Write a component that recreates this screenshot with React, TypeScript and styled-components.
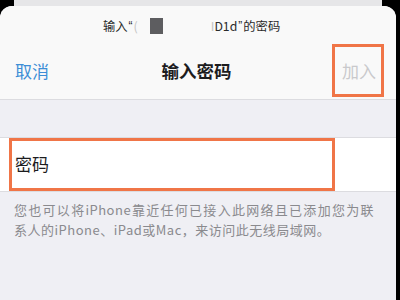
import React from 'react';
import styled, { createGlobalStyle } from 'styled-components';

const GlobalStyle = createGlobalStyle`
    html, body {
        margin: 0;
        padding: 0;
        background: #000;
    }
    body {
        font-family: "Noto Sans CJK SC", "Noto Sans", sans-serif;
        -webkit-font-smoothing: antialiased;
    }
`;

const App: React.FC = () => {
    return (
        <Screen>
            <GlobalStyle />
            <BackSheet />
            <Sheet>
                <Header>
                    <Subtitle>
                        输入<Quote>“</Quote><Faint>(</Faint>
                        <Masked />
                        <Hidden />
                        <Faint>I</Faint>D1d<Quote>”</Quote>的密码
                    </Subtitle>
                    <NavBar>
                        <NavButton>取消</NavButton>
                        <NavTitle>输入密码</NavTitle>
                        <Highlight>
                            <NavButton disabled>加入</NavButton>
                        </Highlight>
                    </NavBar>
                </Header>
                <Spacer />
                <FieldRow>
                    <FieldBox>
                        <FieldLabel>密码</FieldLabel>
                    </FieldBox>
                </FieldRow>
                <Footnote>
                    <FootLine full>您也可以将iPhone靠近任何已接入此网络且已添加您为联</FootLine>
                    <FootLine>系人的iPhone、iPad或Mac，来访问此无线局域网。</FootLine>
                </Footnote>
            </Sheet>
        </Screen>
    );
}

const Screen = styled.div`
    width: 400px;
    height: 300px;
    overflow: hidden;
    background: #000;
    display: flex;
    flex-direction: column;
`;

const BackSheet = styled.div`
    height: 6px;
    margin: 0 18px 0 14px;
    background: #e6e6e8;
    flex-shrink: 0;
`;

const Sheet = styled.div`
    flex: 1;
    margin-right: 4px;
    background: #efeff4;
    border-radius: 12px 12px 0 0;
    overflow: hidden;
`;

const Header = styled.div`
    background: #f9f9f9;
    border-bottom: 1px solid #dcdce0;
    height: 94px;
    box-sizing: border-box;
    display: flex;
    flex-direction: column;
`;

const Subtitle = styled.div`
    height: 36px;
    padding-top: 4px;
    box-sizing: border-box;
    display: flex;
    align-items: center;
    padding-left: 103px;
    font-size: 12.3px;
    color: #2a2a2a;
`;

const Quote = styled.span`
    font-family: "Liberation Sans", sans-serif;
    font-size: 12px;
    margin: 0 1px;
`;

const Faint = styled.span`
    color: #c4c4c4;
`;

const Masked = styled.span`
    display: inline-block;
    width: 13px;
    height: 16px;
    margin-left: 12px;
    background: #5d5d60;
`;

const Hidden = styled.span`
    display: inline-block;
    width: 48px;
`;

const NavBar = styled.div`
    flex: 1;
    display: flex;
    align-items: center;
    justify-content: space-between;
    padding: 0 12px 0 15px;
`;

const NavButton = styled.span<{ disabled?: boolean }>`
    font-size: 17px;
    color: ${({ disabled }) => (disabled ? '#c9c9cc' : '#3d8ed6')};
`;

const NavTitle = styled.span`
    font-size: 17.5px;
    font-weight: 700;
    color: #1c1c1e;
    margin-left: 12px;
`;

const Highlight = styled.div`
    width: 44px;
    height: 47px;
    border: 3px solid #f07547;
    display: flex;
    align-items: center;
    justify-content: center;
    padding-left: 2px;
`;

const Spacer = styled.div`
    height: 37px;
`;

const FieldRow = styled.div`
    background: #fff;
    border-top: 1px solid #dcdce0;
    border-bottom: 1px solid #dcdce0;
    height: 55px;
    box-sizing: border-box;
    padding: 0 0 0 9px;
    display: flex;
    align-items: center;
`;

const FieldBox = styled.div`
    width: 317px;
    height: 47px;
    border: 3px solid #f07547;
    display: flex;
    align-items: center;
    padding-left: 3px;
`;

const FieldLabel = styled.span`
    font-size: 17px;
    color: #1c1c1e;
    padding-bottom: 2px;
`;

const Footnote = styled.div`
    padding: 8px 0 0 14px;
    font-size: 13px;
    letter-spacing: 0.5px;
    line-height: 19.5px;
    color: #8a8a8e;
`;

const FootLine = styled.div<{ full?: boolean }>`
    white-space: nowrap;
    width: ${({ full }) => (full ? '360px' : 'auto')};
    text-align: ${({ full }) => (full ? 'justify' : 'left')};
    text-align-last: ${({ full }) => (full ? 'justify' : 'auto')};
    text-justify: inter-character;
`;

export default App;
